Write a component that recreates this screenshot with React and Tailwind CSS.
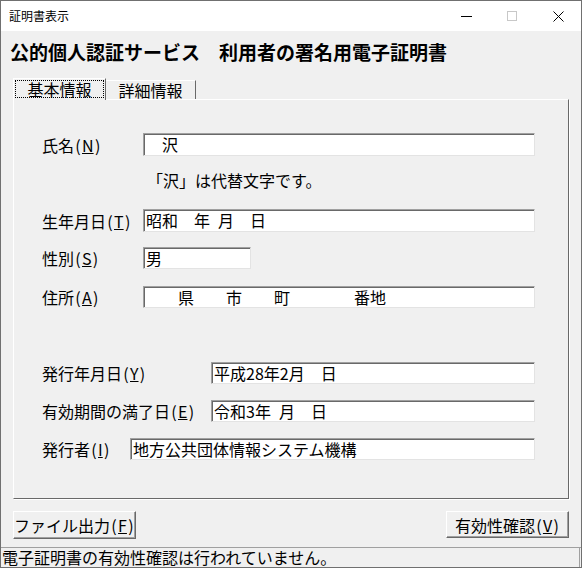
import React from "react";

const Paren = ({ children }) => (
	<span className="inline-block w-[8px] text-center">{children}</span>
);

const Mnemonic = ({ mn }) => (
	<>
		<Paren>(</Paren>
		<u>{mn}</u>
		<Paren>)</Paren>
	</>
);

const Field = ({ children, className = "" }) => (
	<div className={`h-[22px] bg-white border border-t-[#a0a0a0] border-l-[#a0a0a0] border-r-[#e3e3e3] border-b-[#e3e3e3] shadow-[inset_1px_1px_0_#696969] pl-[2px] leading-[20px] whitespace-pre overflow-hidden ${className}`}>
		{children}
	</div>
);

const Row = ({ label, mn, labelW, fieldW, value, className = "" }) => (
	<div className={`flex items-center ${className}`}>
		<div className={`${labelW} leading-[20px] whitespace-nowrap`}>
			{label}
			<Mnemonic mn={mn} />
		</div>
		<Field className={fieldW}>{value}</Field>
	</div>
);

export default function App() {
	return (
		<div className="w-[582px] h-[568px] flex flex-col border border-[#707070] bg-[#f0f0f0] text-black text-[16px] leading-[20px] font-['Noto_Sans_CJK_JP',sans-serif] overflow-hidden">
			{/* title bar */}
			<div className="h-[30px] bg-white flex items-center pl-[8px] shrink-0">
				<span className="text-[12px] leading-[16px]">証明書表示</span>
				<div className="ml-auto flex items-center h-full">
					<div className="w-[46px] h-full flex items-center justify-center">
						<svg width="11" height="11" viewBox="0 0 11 11"><path d="M0 5.5h11" stroke="#000" strokeWidth="1" /></svg>
					</div>
					<div className="w-[46px] h-full flex items-center justify-center">
						<svg width="10" height="10" viewBox="0 0 10 10"><rect x="0.5" y="0.5" width="9" height="9" fill="none" stroke="#c8c8c8" /></svg>
					</div>
					<div className="w-[46px] h-full flex items-center justify-center">
						<svg width="11" height="11" viewBox="0 0 11 11"><path d="M0.5 0.5l10 10M10.5 0.5l-10 10" stroke="#000" strokeWidth="1" /></svg>
					</div>
				</div>
			</div>

			{/* heading */}
			<div className="pl-[9px] pt-[9px] text-[19px] leading-[24px] font-bold whitespace-pre">公的個人認証サービス　利用者の署名用電子証明書</div>

			{/* tabs */}
			<div className="mt-[14px] pl-[12px] flex items-end relative z-10 -mb-px">
				<div className="w-[93px] h-[22px] bg-[#f0f0f0] border-t border-l border-white border-r border-r-[#696969] px-[1px] pt-[1px] pb-[2px]">
					<div className="h-full border border-dotted border-black flex items-center justify-center text-[16px] leading-[18px]">基本情報</div>
				</div>
				<div className="w-[90px] h-[19px] mb-px border-t border-white border-r border-r-[#696969] flex items-center justify-center text-[16px] leading-[18px]">詳細情報</div>
			</div>

			{/* panel */}
			<div className="ml-[12px] w-[556px] h-[400px] border border-t-white border-l-white border-r-[#696969] border-b-[#696969] shadow-[1px_1px_0_#ffffff] pt-[33px] pl-[28px] flex flex-col">
				<Row label="氏名" mn="N" labelW="w-[101px]" fieldW="w-[392px] h-[23px]" value="　沢" />
				<div className="mt-[14px] ml-[105px] leading-[20px]">「沢」は代替文字です。</div>
				<Row className="mt-[19px]" label="生年月日" mn="T" labelW="w-[101px]" fieldW="w-[392px] h-[23px]" value={"昭和　年\u2002月　日"} />
				<Row className="mt-[15px]" label="性別" mn="S" labelW="w-[101px]" fieldW="w-[108px]" value="男" />
				<Row className="mt-[17px]" label="住所" mn="A" labelW="w-[101px]" fieldW="w-[392px]" value="　　県　　市　　町　　　　番地" />
				<Row className="mt-[54px]" label="発行年月日" mn="Y" labelW="w-[169px]" fieldW="w-[324px]" value="平成28年2月　日" />
				<Row className="mt-[16px]" label="有効期間の満了日" mn="E" labelW="w-[169px]" fieldW="w-[324px]" value={"令和3年\u2002月　日"} />
				<Row className="mt-[16px]" label="発行者" mn="I" labelW="w-[88px]" fieldW="w-[405px]" value="地方公共団体情報システム機構" />
			</div>

			{/* buttons */}
			<div className="mt-[12px] ml-[12px] w-[556px] flex justify-between">
				<button className="w-[123px] h-[28px] bg-[#f0f0f0] border border-t-white border-l-white border-r-[#696969] border-b-[#696969] shadow-[inset_-1px_-1px_0_#a0a0a0] leading-[20px] whitespace-nowrap">
					ファイル出力<Mnemonic mn="F" />
				</button>
				<button className="w-[123px] h-[27px] bg-[#f0f0f0] border border-t-white border-l-white border-r-[#696969] border-b-[#696969] shadow-[inset_-1px_-1px_0_#a0a0a0] leading-[20px] whitespace-nowrap">
					有効性確認<Mnemonic mn="V" />
				</button>
			</div>

			{/* status bar */}
			<div className="mt-[8px] flex-1 border-t border-[#a0a0a0] flex">
				<div className="flex-1 mr-[1px] border-r border-[#a0a0a0] pl-[1px] leading-[19px] whitespace-nowrap">電子証明書の有効性確認は行われていません。</div>
			</div>
		</div>
	);
}
